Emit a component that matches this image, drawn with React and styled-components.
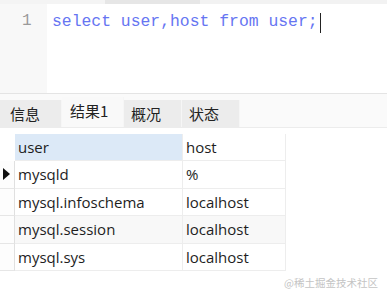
import React from "react";
import styled, { createGlobalStyle } from "styled-components";

const Global = createGlobalStyle`
  html, body { margin: 0; padding: 0; background: #ffffff; }
  body { width: 387px; height: 297px; overflow: hidden; }
`;

const Page = styled.div`
  width: 387px;
  height: 297px;
  display: flex;
  flex-direction: column;
  background: #fff;
  position: relative;
  font-family: "Open Sans", "Noto Sans CJK SC", sans-serif;
`;

const TopStrip = styled.div`
  height: 4px;
  display: flex;
  background: #e9e9e9;
`;

const StripSeg = styled.div`
  width: ${(p) => p.$w}px;
  background: ${(p) => p.$c};
`;

const Editor = styled.div`
  height: 89px;
  display: flex;
  background: #fff;
  border-bottom: 1px solid #e4e4e4;
`;

const Gutter = styled.div`
  width: 47px;
  background: #f8f8f8;
  color: #9a9a9a;
  font-family: "Liberation Mono", monospace;
  font-size: 16px;
  padding-top: 8px;
  padding-left: 22px;
  box-sizing: border-box;
`;

const Code = styled.div`
  padding-left: 5px;
  padding-top: 8px;
  font-family: "Liberation Mono", monospace;
  font-size: 16.4px;
  color: #6675f2;
  display: flex;
  align-items: flex-start;
  white-space: pre;
`;

const Caret = styled.span`
  display: inline-block;
  width: 1px;
  height: 20px;
  background: #222;
  margin-left: 2px;
  margin-top: 1px;
`;

const TabBar = styled.div`
  height: 33px;
  display: flex;
  align-items: flex-end;
  background: #fafafa;
  border-bottom: 1px solid #ececec;
`;

const Tab = styled.div`
  width: ${(p) => p.$w}px;
  height: ${(p) => (p.$active ? 30 : 27)}px;
  box-sizing: border-box;
  background: ${(p) => (p.$active ? "#f9f9f9" : "#ececec")};
  border-right: 1px solid #f6f6f6;
  font-family: "Noto Sans CJK SC", sans-serif;
  font-size: 15px;
  color: #222;
  display: flex;
  align-items: center;
  padding-left: ${(p) => p.$pl}px;
  padding-bottom: ${(p) => (p.$active ? 4 : 0)}px;
`;

const Grid = styled.div`
  margin-top: 6px;
  display: grid;
  grid-template-columns: 15px 168px 103px;
  width: 286px;
`;

const Cell = styled.div`
  height: ${(p) => p.$h}px;
  box-sizing: border-box;
  border-bottom: 1px solid #ededed;
  border-right: 1px solid #ededed;
  background: ${(p) => p.$bg};
  display: flex;
  align-items: center;
  padding-left: 3px;
  font-size: 15px;
  color: #1e1e1e;
`;

const Marker = styled.div`
  height: ${(p) => p.$h}px;
  box-sizing: border-box;
  border-bottom: 1px solid ${(p) => (p.$blank ? "transparent" : "#e6e6e6")};
  border-right: 1px solid ${(p) => (p.$blank ? "transparent" : "#e0e0e0")};
  background: ${(p) => (p.$blank ? "#fff" : "#fdfdfd")};
  display: flex;
  align-items: center;
  padding-left: 3px;
`;

const Arrow = styled.div`
  width: 0;
  height: 0;
  border-top: 6px solid transparent;
  border-bottom: 6px solid transparent;
  border-left: 7px solid #111;
`;

const Watermark = styled.div`
  position: absolute;
  right: 9px;
  bottom: 7px;
  font-family: "Noto Sans CJK SC", sans-serif;
  font-size: 10.5px;
  color: #c4c4c4;
`;

const rows = [
  ["mysqld", "%", true, "#fff"],
  ["mysql.infoschema", "localhost", false, "#fff"],
  ["mysql.session", "localhost", false, "#f8f8f8"],
  ["mysql.sys", "localhost", false, "#fff"],
];

export default function App() {
  return (
    <Page>
      <Global />
      <TopStrip>
        <StripSeg $w={105} $c="#f4f4f4" />
        <StripSeg $w={95} $c="#e6e6e6" />
        <StripSeg $w={187} $c="#f2f2f2" />
      </TopStrip>
      <Editor>
        <Gutter>1</Gutter>
        <Code>
          select user,host from user;<Caret />
        </Code>
      </Editor>
      <TabBar>
        <Tab $w={62} $pl={10}>信息</Tab>
        <Tab $w={62} $pl={8} $active>结果1</Tab>
        <Tab $w={58} $pl={7}>概况</Tab>
        <Tab $w={58} $pl={7}>状态</Tab>
      </TabBar>
      <Grid>
        <Marker $h={27} $blank />
        <Cell $h={27} $bg="#dce9f7">user</Cell>
        <Cell $h={27} $bg="#fff">host</Cell>
        {rows.map(([u, h, cur, bg]) => (
          <React.Fragment key={u}>
            <Marker $h={27.5}>{cur && <Arrow />}</Marker>
            <Cell $h={27.5} $bg={bg}>{u}</Cell>
            <Cell $h={27.5} $bg={bg}>{h}</Cell>
          </React.Fragment>
        ))}
      </Grid>
      <Watermark>@稀土掘金技术社区</Watermark>
    </Page>
  );
}
